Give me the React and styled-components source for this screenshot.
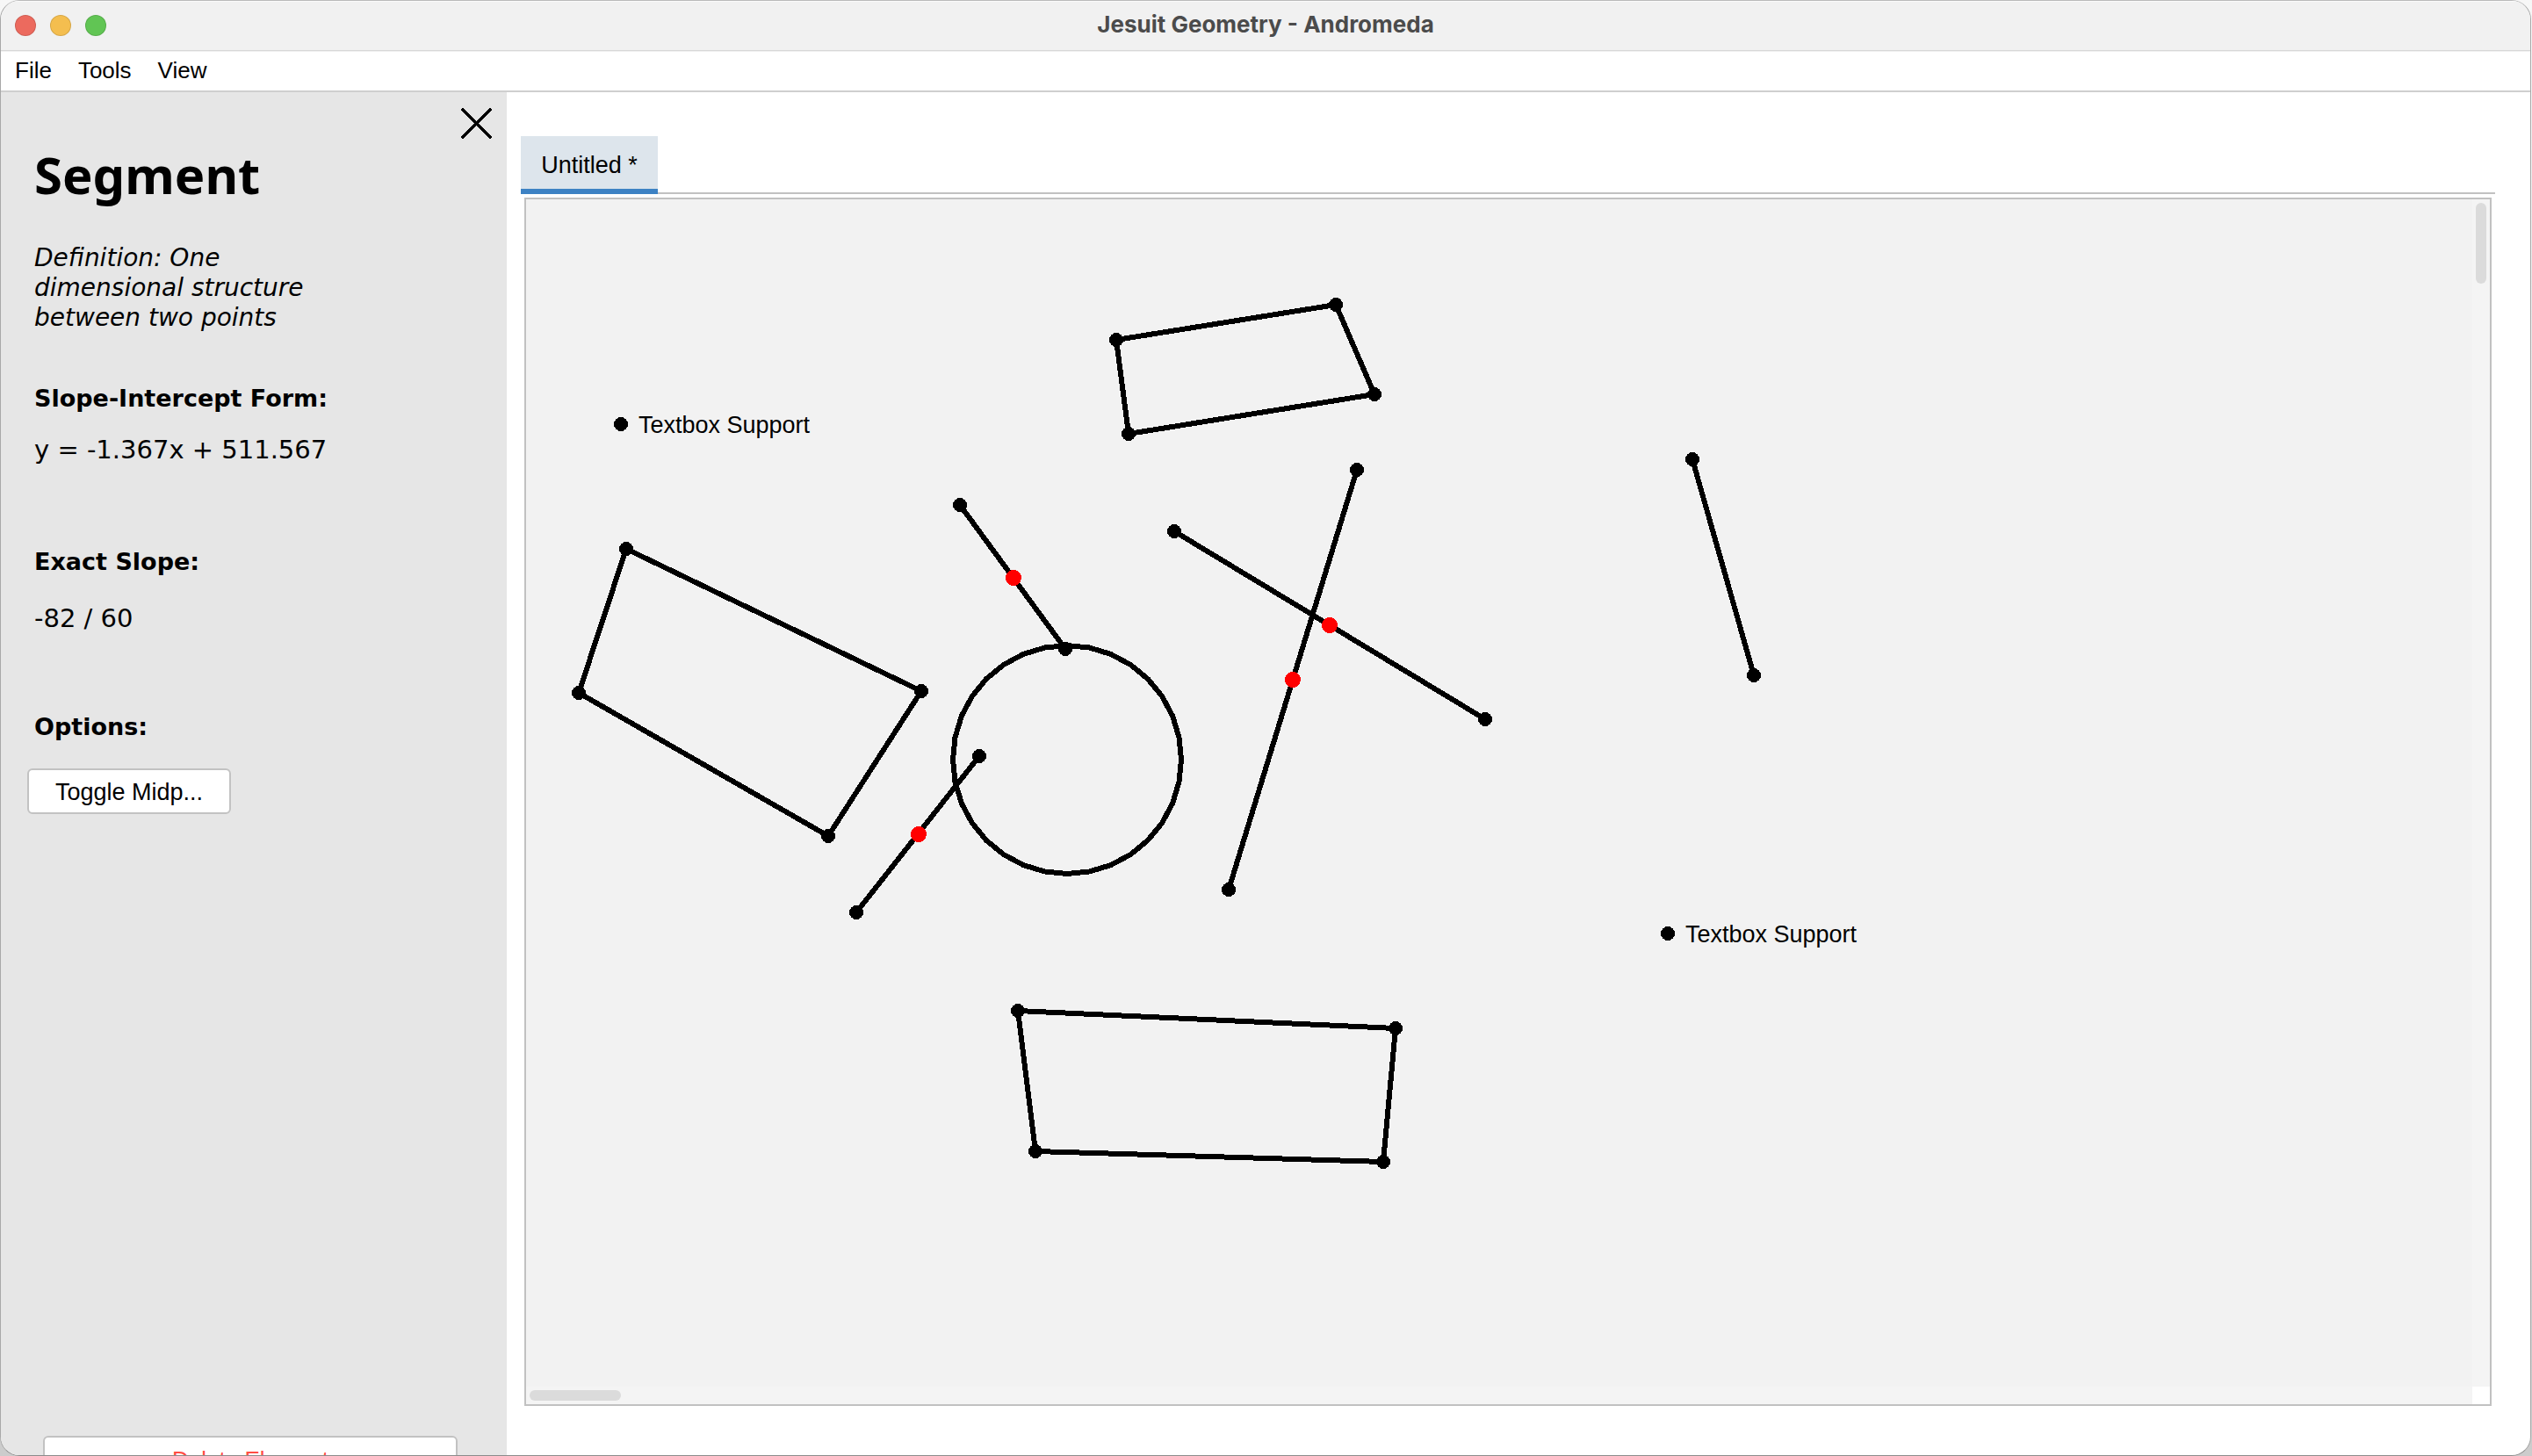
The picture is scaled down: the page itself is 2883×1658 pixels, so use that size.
import React from "react";
import styled, { createGlobalStyle } from "styled-components";

const sans = `"Liberation Sans", Arial, sans-serif`;
const humanist = `"DejaVu Sans", "Lucida Grande", sans-serif`;
const line = "#c1c1c1";

const GlobalStyle = createGlobalStyle`
  *, *::before, *::after { box-sizing: border-box; }
  body {
    margin: 0;
    background: linear-gradient(#f7f7f7, #cccccc);
    color: #000;
    font-family: ${sans};
    font-size: 26px;
    line-height: 30px;
  }
  button { font: inherit; color: inherit; cursor: pointer; }
`;

const Window = styled.div`
  display: flex;
  flex-direction: column;
  height: 100vh;
  margin-right: 1px;
  overflow: hidden;
  background: #fff;
  border: 1px solid #a8a8a8;
  border-top-color: #bababa;
  border-bottom-color: #8c8c8c;
  border-radius: 22px;
`;

const TitleBar = styled.header`
  display: grid;
  grid-template-columns: 1fr auto 1fr;
  align-items: center;
  flex: none;
  height: 57px;
  padding: 0 16px;
  background: #f1f1f1;
  border-bottom: 1px solid #d8d8d8;
  box-shadow: inset 0 1px 0 #fafafa;
`;

const Lights = styled.div`
  display: flex;
  gap: 16px;
`;

const Light = styled.button`
  width: 24px;
  height: 24px;
  padding: 0;
  border: 1px solid rgba(0, 0, 0, 0.12);
  border-radius: 50%;
  background: ${(p) => p.$color};
`;

const WindowTitle = styled.div`
  padding-bottom: 2px;
  font-family: Inter, sans-serif;
  font-size: 26px;
  font-weight: 700;
  color: #4b4b4b;
`;

const MenuBar = styled.nav`
  display: flex;
  align-items: center;
  flex: none;
  height: 47px;
  padding: 0 0 2px 1px;
  border-top: 1px solid #efefef;
  border-bottom: 2px solid #cfcfcf;
`;

const MenuItem = styled.button`
  padding: 0 15px;
  border: 0;
  background: none;
`;

const Body = styled.div`
  display: flex;
  flex: 1;
  min-height: 0;
`;

const Sidebar = styled.aside`
  flex: none;
  width: 576px;
  overflow: hidden;
  background: #e6e6e6;
  font-family: ${humanist};
  font-size: 28px;
  line-height: 34px;
`;

const Details = styled.div`
  display: flex;
  flex-direction: column;
  align-items: flex-start;
  min-height: calc(100vh - 128px);
  padding: 18px 16px 0 38px;
`;

const CloseButton = styled.button`
  display: flex;
  align-self: flex-end;
  padding: 0;
  border: 0;
  background: none;
`;

const Heading = styled.h1`
  margin: 0;
  font-family: "Noto Sans", sans-serif;
  font-size: 58px;
  font-weight: 700;
  line-height: 80px;
`;

const Definition = styled.p`
  width: 360px;
  margin: 38px 0 0;
  font-style: italic;
`;

const Group = styled.section`
  display: flex;
  flex-direction: column;
  align-items: flex-start;
  gap: ${(p) => p.$gap}px;
  margin-top: ${(p) => p.$top}px;
`;

const Label = styled.h2`
  margin: 0;
  font-size: 27px;
  font-weight: 700;
  line-height: 34px;
`;

const Value = styled.p`
  margin: 0;
  font-size: 29px;
`;

const PanelButton = styled.button`
  height: 52px;
  padding: 2px 16px 0;
  background: #fff;
  border: 2px solid #c2c2c2;
  border-radius: 6px;
  font-family: ${sans};
  line-height: 30px;
`;

const ToggleButton = styled(PanelButton)`
  width: 232px;
  margin-left: -8px;
  font-size: 27px;
`;

const DeleteButton = styled(PanelButton)`
  display: block;
  width: 472px;
  margin: 0 auto 0 48px;
  font-size: 26px;
  color: #ff4d43;
`;

const Workspace = styled.main`
  display: flex;
  flex-direction: column;
  flex: 1;
  min-width: 0;
  padding: 50px 40px 56px 16px;
`;

const TabList = styled.div`
  display: flex;
  flex: none;
  height: 66px;
  box-shadow: inset 0 -2px 0 ${line};
`;

const Tab = styled.button`
  width: 156px;
  padding: 6px 0 0;
  border: 0;
  border-bottom: 6px solid #3d82c4;
  background: #dde5ec;
  font-size: 27px;
`;

const Frame = styled.div`
  display: grid;
  grid-template: minmax(0, 1fr) 20px / minmax(0, 1fr) 20px;
  flex: 1;
  min-height: 0;
  margin: 4px 4px 0;
  border: 2px solid ${line};
`;

const Drawing = styled.svg`
  display: block;
  width: 100%;
  height: 100%;
  background: #f2f2f2;
  font-family: ${sans};
  font-size: 27px;
`;

const Track = styled.div`
  padding: 4px;
  background: #f4f4f4;
`;

const Thumb = styled.div`
  width: ${(p) => (p.$vertical ? 12 : 104)}px;
  height: ${(p) => (p.$vertical ? 92 : 12)}px;
  border-radius: 6px;
  background: #dbdbdb;
`;

const quads = [
  [[114, 398], [450, 560], [344, 725], [60, 562]],
  [[672, 160], [922, 120], [966, 222], [686, 267]],
  [[560, 924], [990, 944], [976, 1096], [580, 1084]],
];

const segments = [
  { a: [494, 348], b: [614, 512], mid: [555, 431] },
  { a: [516, 634], b: [376, 812], mid: [447, 723] },
  { a: [946, 308], b: [800, 786], mid: [873, 547] },
  { a: [738, 378], b: [1092, 592], mid: [915, 485] },
  { a: [1328, 296], b: [1398, 542] },
];

const notes = [[108, 256], [1300, 836]];

// The circle is rendered as a 32-sided polygon.
const ring = Array.from({ length: 32 }, (_, i) => {
  const t = (i * Math.PI) / 16;
  return [616 + 130 * Math.cos(t), 638 + 130 * Math.sin(t)];
});

const Dot = ({ at, red }) => (
  <circle cx={at[0]} cy={at[1]} r={red ? 9 : 8} fill={red ? "#ff0000" : "#000"} />
);

function Geometry() {
  const vertices = [...quads.flat(), ...segments.flatMap((s) => [s.a, s.b]), ...notes];
  return (
    <Drawing role="img" aria-label="Geometry canvas">
      <g shapeRendering="crispEdges">
        <g fill="none" stroke="#000" strokeWidth="6">
          {quads.map((q, i) => <polygon key={i} points={q.join(" ")} />)}
          <polygon points={ring.join(" ")} />
          {segments.map(({ a, b }, i) => (
            <line key={i} x1={a[0]} y1={a[1]} x2={b[0]} y2={b[1]} />
          ))}
        </g>
        {vertices.map((v, i) => <Dot key={i} at={v} />)}
        {segments.filter((s) => s.mid).map((s, i) => <Dot key={i} at={s.mid} red />)}
      </g>
      {notes.map(([x, y], i) => (
        <text key={i} x={x + 20} y={y + 10}>Textbox Support</text>
      ))}
    </Drawing>
  );
}

export default function App() {
  return (
    <>
      <GlobalStyle />
      <Window>
        <TitleBar>
          <Lights>
            <Light $color="#ec6a5e" aria-label="Close window" />
            <Light $color="#f4be4f" aria-label="Minimize window" />
            <Light $color="#61c554" aria-label="Zoom window" />
          </Lights>
          <WindowTitle>Jesuit Geometry - Andromeda</WindowTitle>
        </TitleBar>
        <MenuBar>
          <MenuItem>File</MenuItem>
          <MenuItem>Tools</MenuItem>
          <MenuItem>View</MenuItem>
        </MenuBar>
        <Body>
          <Sidebar>
            <Details>
              <CloseButton aria-label="Close panel">
                <svg width="36" height="36" viewBox="0 0 36 36" shapeRendering="crispEdges">
                  <path d="M2 2L33 33M33 2L2 33" stroke="#000" strokeWidth="4" strokeLinecap="round" />
                </svg>
              </CloseButton>
              <Heading>Segment</Heading>
              <Definition>Definition: One dimensional structure between two points</Definition>
              <Group $top={58} $gap={24}>
                <Label>Slope-Intercept Form:</Label>
                <Value>y = -1.367x + 511.567</Value>
              </Group>
              <Group $top={94} $gap={30}>
                <Label>Exact Slope:</Label>
                <Value>-82 / 60</Value>
              </Group>
              <Group $top={90} $gap={30}>
                <Label>Options:</Label>
                <ToggleButton>Toggle Midp...</ToggleButton>
              </Group>
            </Details>
            <DeleteButton>Delete Element</DeleteButton>
          </Sidebar>
          <Workspace>
            <TabList role="tablist">
              <Tab role="tab" aria-selected="true">Untitled *</Tab>
            </TabList>
            <Frame>
              <Geometry />
              <Track><Thumb $vertical /></Track>
              <Track><Thumb /></Track>
            </Frame>
          </Workspace>
        </Body>
      </Window>
    </>
  );
}
